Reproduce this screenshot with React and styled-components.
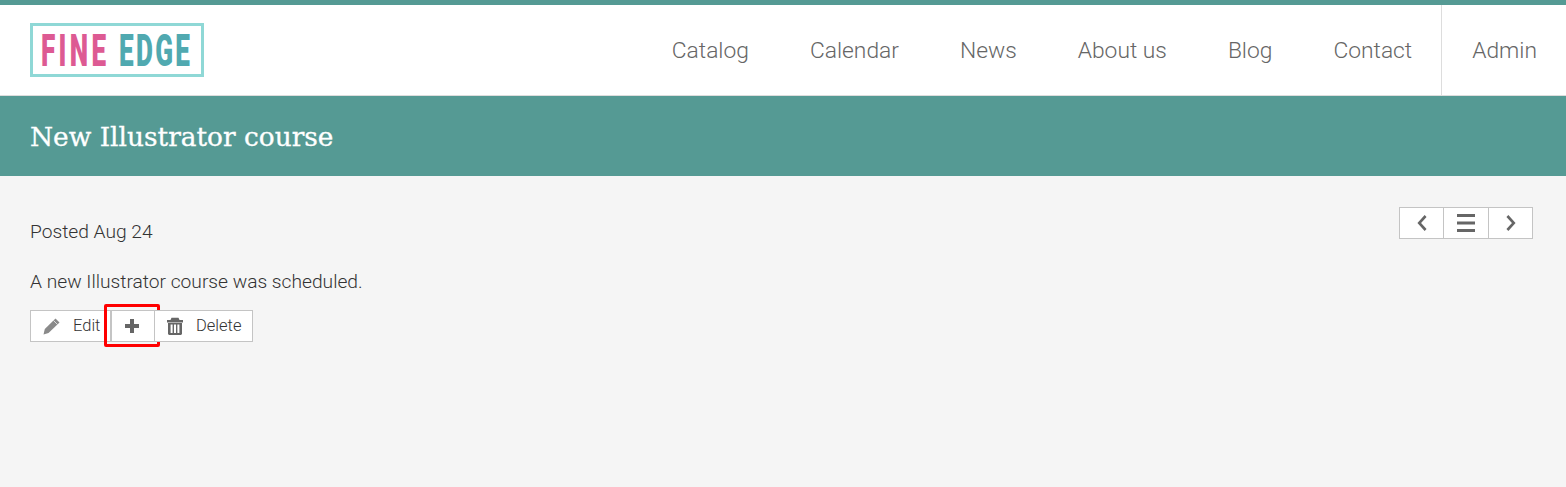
import React from 'react'
import styled, { createGlobalStyle } from 'styled-components'

const Global = createGlobalStyle`
  html, body {
    margin: 0;
    padding: 0;
    height: 100%;
    background: #f5f5f5;
  }
  #root {
    min-height: 100%;
  }
`

const Page = styled.div`
  min-height: 487px;
  background: #f5f5f5;
  font-family: Roboto, "Liberation Sans", sans-serif;
  font-weight: 300;
  color: #333;
`

const Header = styled.header`
  display: flex;
  justify-content: space-between;
  height: 90px;
  background: #fff;
  border-top: 5px solid #559a94;
  border-bottom: 1px solid #ddd;
`

const Logo = styled.div`
  display: flex;
  align-items: center;
  gap: 12px;
  box-sizing: border-box;
  width: 174px;
  height: 54px;
  margin: 18px 0 0 30px;
  padding-left: 8px;
  border: 3px solid #8fd8d6;
  overflow: hidden;
`

const LogoWord = styled.span`
  display: inline-block;
  width: ${props => props.$w}px;
  font-family: Roboto, "Liberation Sans", sans-serif;
  font-weight: 900;
  font-size: 45px;
  line-height: 1;
  letter-spacing: ${props => props.$ls}px;
  transform: scaleX(${props => props.$scale});
  transform-origin: left center;
  color: ${props => props.$color};
  white-space: nowrap;
`

const Nav = styled.nav`
  display: flex;
  height: 100%;
`

const NavLink = styled.a`
  display: flex;
  align-items: center;
  font-size: 22.8px;
  color: #666;
  padding: 0 29px 0 ${props => (props.$divided ? 30 : 32)}px;
  border-left: ${props => (props.$divided ? '1px solid #ddd' : 'none')};
`

const TitleBand = styled.div`
  display: flex;
  align-items: center;
  height: 80px;
  padding-left: 30px;
  background: #559a94;
  box-sizing: border-box;
`

const Title = styled.h1`
  margin: 0;
  font-family: "DejaVu Serif", serif;
  font-weight: 400;
  font-size: 26.4px;
  color: #fff;
  -webkit-text-stroke: 0.3px #fff;
`

const Content = styled.main`
  display: flex;
  flex-direction: column;
  padding: 31px 33px 0 30px;
`

const TopRow = styled.div`
  display: flex;
  justify-content: space-between;
  align-items: flex-start;
`

const Posted = styled.p`
  margin: 13px 0 0;
  font-size: 19.2px;
  line-height: 24px;
  color: #333;
`

const Body = styled.p`
  margin: 26px 0 0;
  font-size: 19.2px;
  line-height: 24px;
  color: #333;
`

const Pager = styled.div`
  display: flex;
  height: 32px;
  background: #fff;
  border: 1px solid #c4c4c4;
  box-sizing: border-box;
`

const PagerButton = styled.div`
  display: flex;
  align-items: center;
  justify-content: center;
  box-sizing: border-box;
  width: ${props => props.$w}px;
  border-left: ${props => (props.$first ? 'none' : '1px solid #c4c4c4')};
`

const Actions = styled.div`
  display: flex;
  margin-top: 16px;
  height: 32px;
`

const ActionButton = styled.div`
  position: relative;
  display: flex;
  align-items: center;
  box-sizing: border-box;
  width: ${props => props.$w}px;
  padding-left: ${props => props.$pad}px;
  gap: ${props => props.$gap}px;
  background: #fff;
  border: 1px solid #c4c4c4;
  border-left: ${props => (props.$noLeft ? 'none' : '1px solid #c4c4c4')};
  font-size: 16.5px;
  line-height: 28px;
  color: #333;
`

const Highlight = styled.span`
  position: absolute;
  left: -8px;
  top: -7px;
  width: 56px;
  height: 43px;
  box-sizing: border-box;
  border: 3px solid #ff0000;
  border-radius: 2px;
`

const ChevronLeft = () => (
  <svg width="12" height="18" viewBox="0 0 12 18">
    <path d="M9.6 2 L3.2 9 L9.6 16" fill="none" stroke="#666" strokeWidth="2.6" />
  </svg>
)

const ChevronRight = () => (
  <svg width="12" height="18" viewBox="0 0 12 18">
    <path d="M2.4 2 L8.8 9 L2.4 16" fill="none" stroke="#666" strokeWidth="2.6" />
  </svg>
)

const Bars = () => (
  <svg width="18" height="18" viewBox="0 0 18 18">
    <path d="M0 1.5h18M0 9h18M0 16.5h18" fill="none" stroke="#666" strokeWidth="3" />
  </svg>
)

const Pencil = () => (
  <svg width="17" height="17" viewBox="0 0 17 17">
    <path d="M12.5 0.5 L16.5 4.5 L5.5 15 L0.5 16.5 L1.8 11 Z" fill="#8a8a8a" />
    <path d="M10.6 2.6 L14.4 6.4" stroke="#fff" strokeWidth="0.7" />
  </svg>
)

const Plus = () => (
  <svg width="14" height="14" viewBox="0 0 14 14">
    <path d="M5 0h4v5h5v4H9v5H5V9H0V5h5z" fill="#666" />
  </svg>
)

const Trash = () => (
  <svg width="16" height="18" viewBox="0 0 16 18">
    <path d="M0 3h16v2.4H0zM4.5 0.8h7L12.5 3h-9z" fill="#666" />
    <path fillRule="evenodd" d="M1 6h14v11l-1 1H2l-1-1zM3.6 7.5v8.5h2V7.5zM7 7.5v8.5h2V7.5zM10.4 7.5v8.5h2V7.5z" fill="#666" />
  </svg>
)

const links = ['Catalog', 'Calendar', 'News', 'About us', 'Blog', 'Contact']

export default function App() {
  return (
    <Page>
      <Global />
      <Header>
        <Logo>
          <LogoWord $color="#dd5a93" $w={66} $ls={5.7} $scale={0.58}>FINE</LogoWord>
          <LogoWord $color="#50a9b0" $w={74} $ls={4} $scale={0.58}>EDGE</LogoWord>
        </Logo>
        <Nav>
          {links.map(l => (
            <NavLink key={l}>{l}</NavLink>
          ))}
          <NavLink $divided>Admin</NavLink>
        </Nav>
      </Header>
      <TitleBand>
        <Title>New Illustrator course</Title>
      </TitleBand>
      <Content>
        <TopRow>
          <Posted>Posted Aug 24</Posted>
          <Pager>
            <PagerButton $first $w={43}><ChevronLeft /></PagerButton>
            <PagerButton $w={45}><Bars /></PagerButton>
            <PagerButton $w={44}><ChevronRight /></PagerButton>
          </Pager>
        </TopRow>
        <Body>A new Illustrator course was scheduled.</Body>
        <Actions>
          <ActionButton $w={81} $pad={12} $gap={13}><Pencil />Edit</ActionButton>
          <ActionButton $w={44} $pad={13} $gap={0}>
            <Plus />
            <Highlight />
          </ActionButton>
          <ActionButton $w={98} $pad={12} $gap={13} $noLeft><Trash />Delete</ActionButton>
        </Actions>
      </Content>
    </Page>
  )
}
